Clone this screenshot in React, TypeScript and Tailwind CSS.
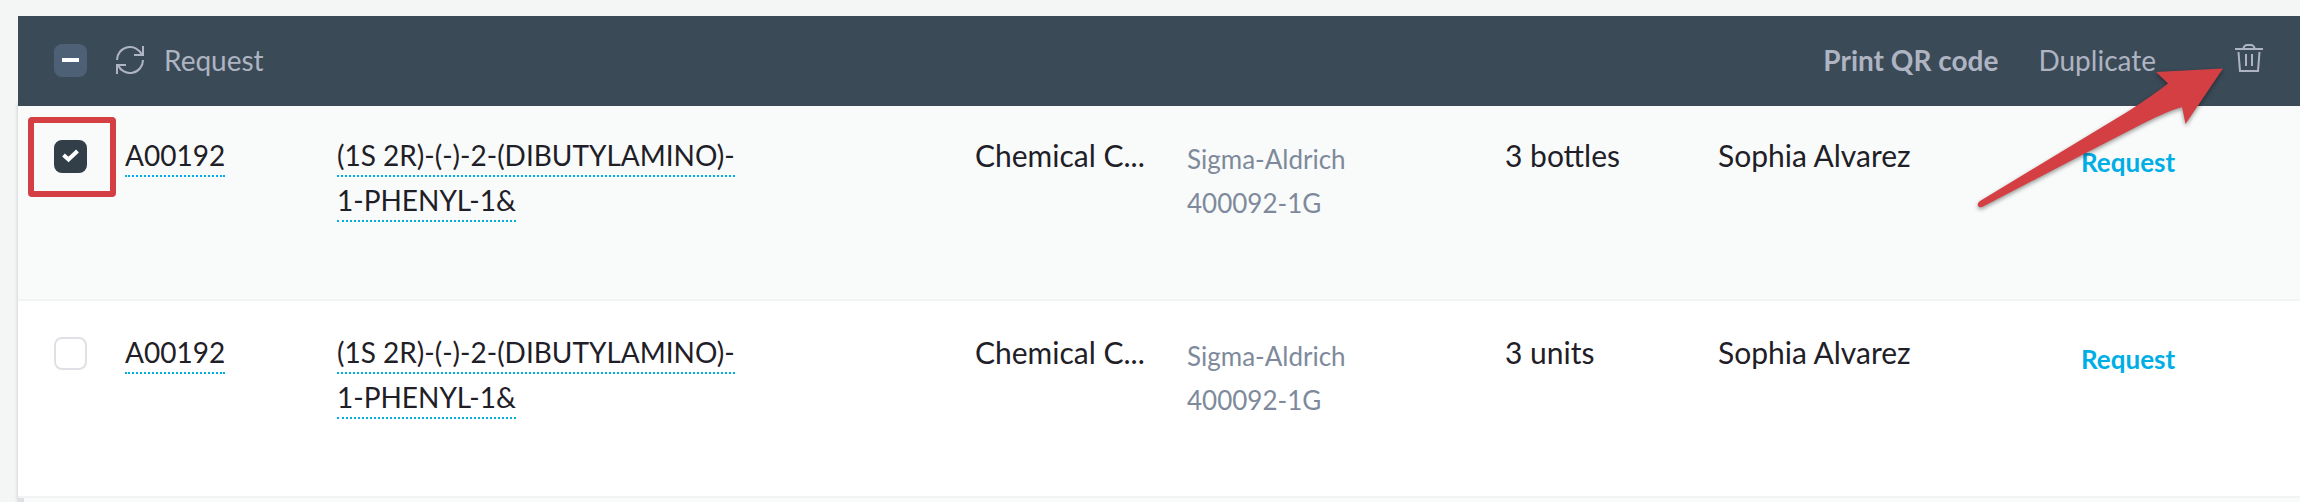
import { useState } from 'react';

interface Item {
  id: number;
  code: string;
  name: string[];
  category: string;
  vendor: string;
  catalog: string;
  amount: string;
  owner: string;
}

const items: Item[] = [
  {
    id: 1,
    code: 'A00192',
    name: ['(1S 2R)-(-)-2-(DIBUTYLAMINO)-', '1-PHENYL-1&'],
    category: 'Chemical C...',
    vendor: 'Sigma-Aldrich',
    catalog: '400092-1G',
    amount: '3 bottles',
    owner: 'Sophia Alvarez',
  },
  {
    id: 2,
    code: 'A00192',
    name: ['(1S 2R)-(-)-2-(DIBUTYLAMINO)-', '1-PHENYL-1&'],
    category: 'Chemical C...',
    vendor: 'Sigma-Aldrich',
    catalog: '400092-1G',
    amount: '3 units',
    owner: 'Sophia Alvarez',
  },
];

function RefreshIcon() {
  return (
    <svg className="w-7 h-7" viewBox="0 0 28 28" fill="none" stroke="currentColor" strokeWidth="2">
      <path d="M1 14A13 13 0 0 1 26 9" />
      <path d="M27 0V9H18" />
      <path d="M27 14A13 13 0 0 1 2 19" />
      <path d="M1 28V19H10" />
    </svg>
  );
}

function TrashIcon() {
  return (
    <svg className="w-7 h-7" viewBox="0 0 28 28" fill="none" stroke="currentColor" strokeWidth="2">
      <path d="M0 5H28" />
      <path d="M8 5C9 2 10 1 12 1H16C18 1 19 2 20 5" />
      <path d="M3.500 8L5 27H23L24.500 8" />
      <path d="M11 10V22M17 10V22" />
    </svg>
  );
}

function Arrow() {
  return (
    <svg
      className="absolute top-14 right-16 z-20 w-[264px] h-[160px] pointer-events-none drop-shadow-[0_2px_2px_rgba(0,0,0,0.4)]"
      viewBox="1972 56 264 160"
      aria-hidden="true"
    >
      <path
        d="M2223 68.500L2156 72L2168 83.500Q2155 94 2127 112L1980 201Q1976 204 1979 207Q1981 208 1984 206L2080 156L2144 123Q2168 111 2182 107L2185.500 124Z"
        fill="#d43f44"
      />
    </svg>
  );
}

function Checkbox({ label, checked, onChange }: { label: string; checked: boolean; onChange: () => void }) {
  return (
    <label className="relative block w-[33px] h-[33px]">
      <input
        type="checkbox"
        aria-label={label}
        checked={checked}
        onChange={onChange}
        className="block appearance-none w-full h-full rounded-lg border-2 border-[#e0e1e6] bg-white checked:border-[#323f49] checked:bg-[#323f49]"
      />
      {checked && (
        <svg className="absolute inset-0" viewBox="0 0 33 33" fill="none" stroke="#fff" strokeWidth="4">
          <path d="M9.500 15L14.500 19.500L23.500 11" />
        </svg>
      )}
    </label>
  );
}

export default function App() {
  const [selected, setSelected] = useState<number[]>([1]);

  const toggle = (id: number) =>
    setSelected((prev) => (prev.includes(id) ? prev.filter((i) => i !== id) : [...prev, id]));

  return (
    <div className="relative min-h-screen overflow-hidden bg-[#f4f6f5] pt-4 pl-[18px] font-[Lato,sans-serif] text-[28px] leading-[45px] text-[#1f2027]">
      <div className="relative z-10 -mb-0.5 flex h-[90px] items-center bg-[#3b4a57] pl-9 pr-[37px] pb-0.5 text-[#aeb4c2]">
        <label className="relative block w-[33px] h-[33px]">
          <input
            type="checkbox"
            aria-label="Select all"
            className="block appearance-none w-full h-full rounded-lg bg-[#4d6075]"
          />
          <span className="absolute left-2 top-3.5 h-1 w-[17px] bg-white" />
        </label>
        <button className="ml-[29px] flex items-center gap-5">
          <RefreshIcon />
          Request
        </button>
        <div className="ml-auto flex items-center">
          <button className="mr-10 font-bold">Print QR code</button>
          <button className="mr-[79px]">Duplicate</button>
          <button aria-label="Delete" className="pb-1">
            <TrashIcon />
          </button>
        </div>
      </div>

      <div className="shadow-[0_0_4px_rgba(0,0,0,0.2)]">
        <table className="w-full table-fixed border-separate border-spacing-0">
          <colgroup>
            <col className="w-[107px]" />
            <col className="w-[212px]" />
            <col />
            <col className="w-[212px]" />
            <col className="w-[318px]" />
            <col className="w-[213px]" />
            <col className="w-[363px]" />
            <col className="w-[219px]" />
          </colgroup>
          <tbody>
            {items.map((item) => (
              <tr
                key={item.id}
                className="h-[197px] bg-white align-top odd:bg-[#f9fbfa] [&>td]:border-b-2 [&>td]:border-[#f2f3f3]"
              >
                <td className="relative pl-9 pt-9">
                  <Checkbox
                    label={`Select ${item.code}`}
                    checked={selected.includes(item.id)}
                    onChange={() => toggle(item.id)}
                  />
                  {item.id === 1 && (
                    <div className="absolute left-2.5 top-[13px] h-20 w-[88px] rounded-sm border-6 border-[#d43f44] pointer-events-none" />
                  )}
                </td>
                <td className="pt-[29px]">
                  <a href="#" className="border-b-2 border-dotted border-[#00aee6] pb-[3px]">{item.code}</a>
                </td>
                <td className="pt-[29px]">
                  <a href="#">
                    {item.name.map((line) => (
                      <span key={line} className="block">
                        <span className="border-b-2 border-dotted border-[#00aee6] pb-[3px]">{line}</span>
                      </span>
                    ))}
                  </a>
                </td>
                <td className="pt-[29px] text-[30px]">{item.category}</td>
                <td className="pt-[33px] text-[26px] leading-[44px] text-[#7e8a9b]">
                  <div>{item.vendor}</div>
                  <div>{item.catalog}</div>
                </td>
                <td className="pt-[29px] text-[30px]">{item.amount}</td>
                <td className="pt-[29px] text-[30px]">{item.owner}</td>
                <td className="pt-9 text-[26px] leading-[44px]">
                  <button className="font-bold text-[#00aee6]">Request</button>
                </td>
              </tr>
            ))}
          </tbody>
        </table>
        <div className="h-1 border-l-6 border-[#dfe0e5] bg-[#f9fbfa]" />
      </div>
      <Arrow />
    </div>
  );
}
